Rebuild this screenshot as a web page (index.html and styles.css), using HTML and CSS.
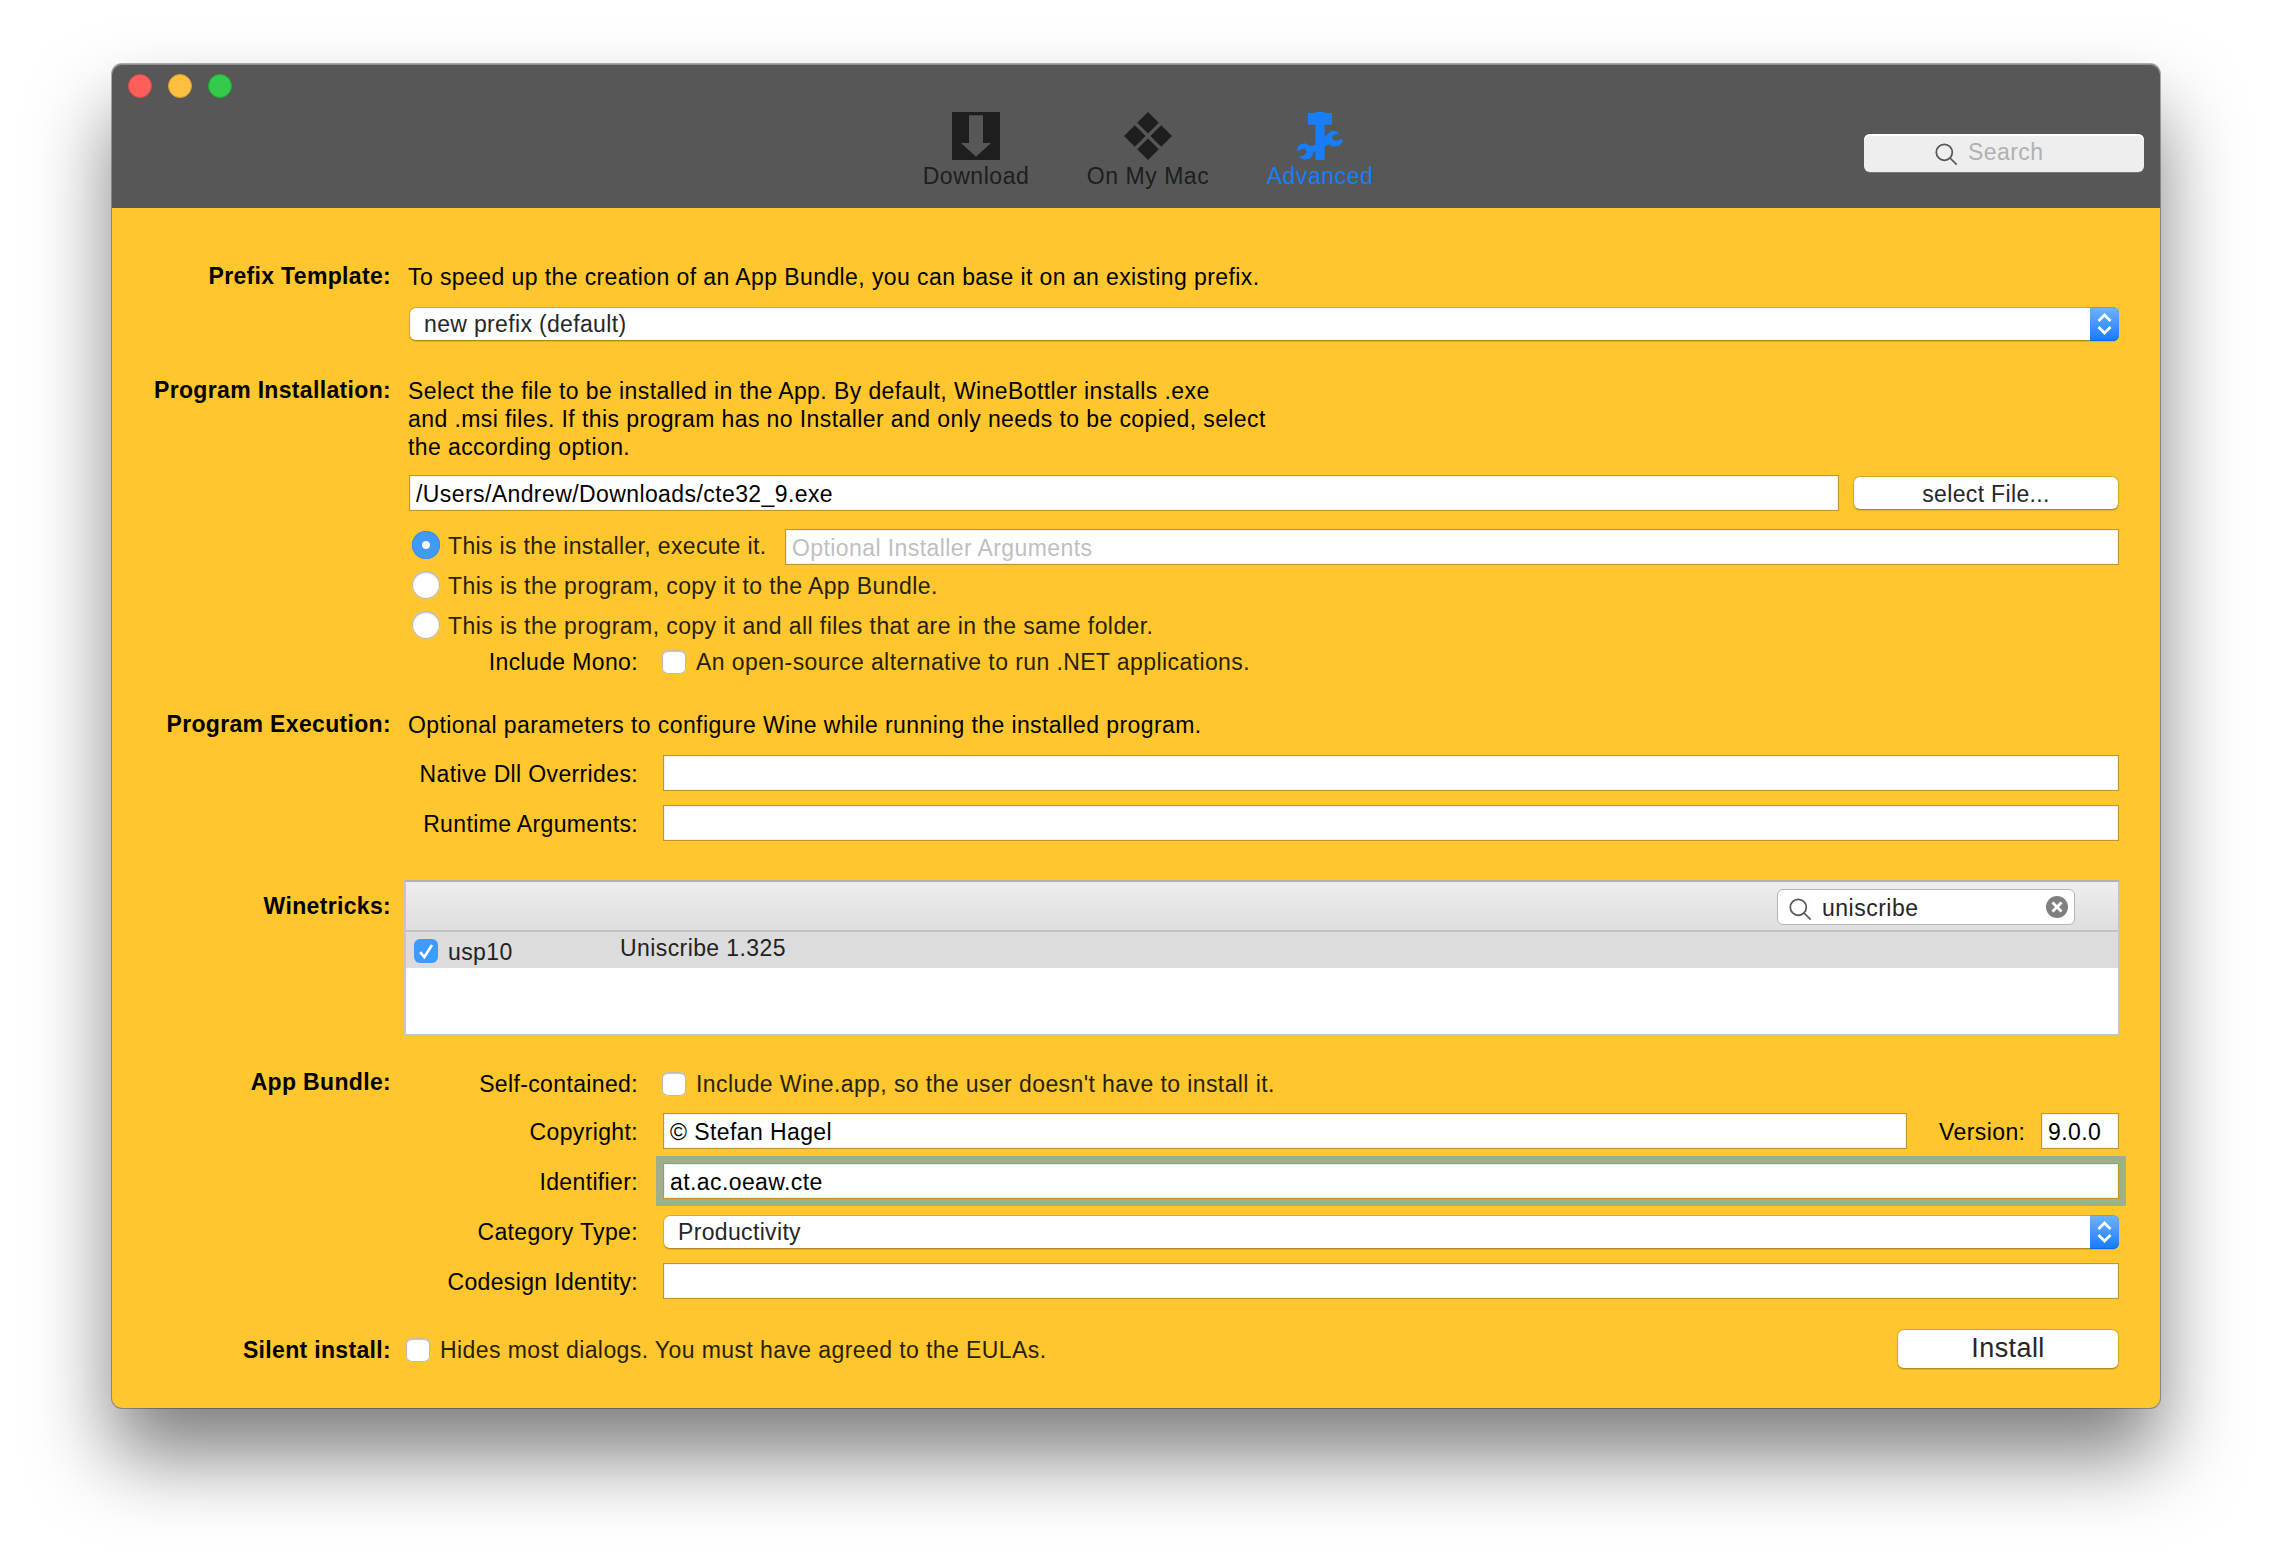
FILE: index.html
```html
<!DOCTYPE html>
<html lang="en">
<head>
<meta charset="utf-8">
<title>WineBottler</title>
<link rel="stylesheet" href="styles.css">
</head>
<body>
<main class="window">
  <header class="titlebar">
    <div class="lights">
      <span class="light red"></span><span class="light yellow"></span><span class="light green"></span>
    </div>
    <nav class="tabs">
      <div class="tab">
        <svg width="48" height="48" viewBox="0 0 48 48"><path fill="currentColor" fill-rule="evenodd" d="M0 0h48v48H0zM17 3.300V31H9L24 44.700 39 31H31V3.300z"/></svg>
        <span>Download</span>
      </div>
      <div class="tab">
        <svg width="48" height="48" viewBox="0 0 48 48"><path fill="currentColor" d="M24 0 34.800 10.800 24 21.600 13.200 10.800zM10.800 13.200 21.600 24 10.800 34.800 0 24zM37.200 13.200 48 24 37.200 34.800 26.400 24zM24 26.400 34.800 37.200 24 48 13.200 37.200z"/></svg>
        <span>On My Mac</span>
      </div>
      <div class="tab active">
        <svg width="48" height="48" viewBox="18 18 144 144"><path fill="currentColor" d="M76 18h28v3h22v35h-22v106H76V56H54V21h22z"/><path fill="currentColor" d="M70 119 100 102 109 87 124 75 137 75 148 81 130 88 126 95 134 106 158 98 157 108 147 120 127 122 118 115 82 133 70 139 67 150 58 158 42 161 26 153 45 147 50 137 43 126 21 136 23 122 32 114 46 112 58 119z"/></svg>
        <span>Advanced</span>
      </div>
    </nav>
    <div class="end">
      <div class="search">
        <svg class="glass" width="24" height="24" viewBox="0 0 24 24"><circle cx="9.300" cy="9.300" r="8"/><path d="M15 15l6.700 6.700"/></svg>
        <span>Search</span>
      </div>
    </div>
  </header>

  <form class="form">
    <div class="row">
      <b class="label">Prefix Template:</b>
      <p class="note">To speed up the creation of an App Bundle, you can base it on an existing prefix.</p>
    </div>
    <div class="row select-row indent">
      <div class="popup"><span>new prefix (default)</span><i class="arrows"><svg width="15" height="22" viewBox="0 0 15 22"><path d="M1.500 8 7.500 2l6 6M1.500 14l6 6 6-6"/></svg></i></div>
    </div>

    <div class="row install">
      <b class="label">Program Installation:</b>
      <p class="note">Select the file to be installed in the App. By default, WineBottler installs .exe<br>and .msi files. If this program has no Installer and only needs to be copied, select<br>the according option.</p>
    </div>
    <div class="row file-row indent">
      <div class="field">/Users/Andrew/Downloads/cte32_9.exe</div>
      <div class="button select-file">select File...</div>
    </div>
    <div class="row radio-row first indent">
      <span class="radio on"></span><span class="choice execute">This is the installer, execute it.</span>
      <div class="field hint">Optional Installer Arguments</div>
    </div>
    <div class="row radio-row second indent"><span class="radio"></span><span class="choice">This is the program, copy it to the App Bundle.</span></div>
    <div class="row radio-row third indent"><span class="radio"></span><span class="choice">This is the program, copy it and all files that are in the same folder.</span></div>
    <div class="row mono-row">
      <span class="sub full">Include Mono:</span><span class="check"></span><span class="choice">An open-source alternative to run .NET applications.</span>
    </div>

    <div class="row execution">
      <b class="label">Program Execution:</b>
      <p class="note">Optional parameters to configure Wine while running the installed program.</p>
    </div>
    <div class="row native"><span class="sub full">Native Dll Overrides:</span><div class="field"></div></div>
    <div class="row gap14"><span class="sub full">Runtime Arguments:</span><div class="field"></div></div>

    <div class="row tricks">
      <b class="label">Winetricks:</b>
      <div class="table">
        <div class="table-head">
          <div class="filter">
            <svg class="glass" width="24" height="24" viewBox="0 0 24 24"><circle cx="9.300" cy="9.300" r="8"/><path d="M15 15l6.700 6.700"/></svg>
            <span>uniscribe</span>
            <svg class="clear" width="22" height="22" viewBox="0 0 22 22"><circle cx="11" cy="11" r="11"/><path d="M6.500 6.500l9 9M15.500 6.500l-9 9"/></svg>
          </div>
        </div>
        <div class="table-row">
          <span class="check on"><svg width="24" height="24" viewBox="0 0 24 24"><path d="M6.200 13.200 10.300 18 18 6"/></svg></span>
          <span class="name">usp10</span><span class="title">Uniscribe 1.325</span>
        </div>
      </div>
    </div>

    <div class="row bundle">
      <b class="label">App Bundle:</b>
      <span class="sub">Self-contained:</span><span class="check"></span><span class="choice">Include Wine.app, so the user doesn't have to install it.</span>
    </div>
    <div class="row copyright">
      <span class="sub full">Copyright:</span><div class="field">© Stefan Hagel</div>
      <span class="version-label">Version:</span><div class="field version">9.0.0</div>
    </div>
    <div class="row gap14"><span class="sub full">Identifier:</span><div class="field focused">at.ac.oeaw.cte</div></div>
    <div class="row category"><span class="sub full">Category Type:</span>
      <div class="popup"><span>Productivity</span><i class="arrows"><svg width="15" height="22" viewBox="0 0 15 22"><path d="M1.500 8 7.500 2l6 6M1.500 14l6 6 6-6"/></svg></i></div>
    </div>
    <div class="row gap14"><span class="sub full">Codesign Identity:</span><div class="field"></div></div>

    <div class="row silent">
      <b class="label">Silent install:</b>
      <span class="check"></span><span class="choice">Hides most dialogs. You must have agreed to the EULAs.</span>
      <div class="button go">Install</div>
    </div>
  </form>
</main>
</body>
</html>
```
FILE: styles.css
```css
* { box-sizing: border-box; }

body {
  margin: 0;
  height: 1568px;
  padding: 64px 112px 0;
  background: #fff;
  overflow: hidden;
  font: 23px/27px "Liberation Sans", Arial, sans-serif;
  letter-spacing: 0.41px;
  color: #000;
}

.window {
  height: 1344px;
  border-radius: 10px;
  background: #ffc72d;
  box-shadow: 0 0 0 1px rgba(0, 0, 0, 0.3), 0 48px 80px rgba(0, 0, 0, 0.5);
}

/* title bar */
.titlebar {
  display: flex;
  height: 144px;
  border-radius: 10px 10px 0 0;
  background: #575757;
  box-shadow: inset 0 1px 0 #8f8f8f;
}
.lights { display: flex; width: 778px; padding: 10px 0 0 16px; gap: 16px; }
.light { width: 24px; height: 24px; border-radius: 50%; border: 1px solid; }
.red { background: #fe5f5a; border-color: #e0443f; }
.yellow { background: #febf40; border-color: #dd9d2b; }
.green { background: #34cb4a; border-color: #1fa831; }

.tabs { display: flex; color: #1e1e1e; letter-spacing: 0.55px; }
.tab { display: flex; flex-direction: column; align-items: center; width: 172px; padding-top: 48px; flex: none; }
.tab span { margin-top: 3px; }
.tab.active { color: #167efb; }
.tab svg { display: block; }

.end { display: flex; flex: 1; justify-content: flex-end; padding: 70px 16px 0 0; }
.search {
  display: flex;
  width: 280px;
  height: 38px;
  padding: 9px 0 0 71px;
  border-radius: 6px;
  background: #eee;
  box-shadow: inset 0 2px 0 #fff, 0 1px 0 #777;
  color: #b1b1b1;
}
.search span { margin: -4px 0 0 9px; }
.glass { flex: none; fill: none; stroke: #555; stroke-width: 1.7; }

/* form rows */
.form { display: flex; flex-direction: column; padding: 55px 41px 0 0; }
.row { display: flex; align-items: flex-start; }
.indent { padding-left: 297px; }
.label { width: 279px; flex: none; text-align: right; letter-spacing: 0.33px; }
.note { margin: 0 0 0 17px; line-height: 28px; white-space: nowrap; }
.sub { width: 247px; flex: none; text-align: right; margin-right: 24px; letter-spacing: 0.36px; }
.sub.full { width: 526px; }
.choice { color: #271f07; white-space: nowrap; }

.field {
  flex: 1;
  height: 36px;
  padding: 5px 0 0 6px;
  border: 1px solid #bf952a;
  background: #fff;
  box-shadow: inset 0 0 0 1px #f1f1f1;
  white-space: nowrap;
}
.focused { box-shadow: inset 0 0 0 1px #f1f1f1, 0 0 0 7px #9fae8d; }
.focused { position: relative; }
.hint { color: #bfbfbf; }

.popup {
  flex: 1;
  display: flex;
  justify-content: space-between;
  height: 34px;
  border: 1px solid #d9a926;
  border-bottom-color: #b08a20;
  border-radius: 7px;
  background: #fff;
  box-shadow: 0 1px 1px rgba(0, 0, 0, 0.12);
  color: #262626;
  letter-spacing: 0.34px;
}
.popup span { padding: 3px 0 0 14px; }
.arrows {
  display: flex;
  align-items: center;
  justify-content: center;
  width: 29px;
  height: 34px;
  margin: -1px -1px 0 0;
  border-radius: 0 6px 6px 0;
  background: linear-gradient(#6fb4f8, #147bfe);
  box-shadow: inset 0 -1px 0 #1068e6, inset 0 1px 0 #5ba4ee;
}
.arrows svg { fill: none; stroke: #fff; stroke-width: 2.7; }

.button {
  border: 1px solid #d9a926;
  border-bottom-color: #b08a20;
  border-radius: 7px;
  background: #fff;
  box-shadow: 0 1px 1px rgba(0, 0, 0, 0.12);
  color: #262626;
  text-align: center;
}

.radio {
  flex: none;
  width: 28px;
  height: 28px;
  margin: 0 8px 0 3px;
  border-radius: 50%;
  background: radial-gradient(#fff 55%, #f4f4f4);
  box-shadow: inset 0 0 0 1px #bdb5a0, inset 0 2px 2px #c9c9c9;
}
.radio.on { background: radial-gradient(circle, #fff 3.500px, #3f9af8 4.500px); box-shadow: inset 0 0 0 1px #3a8fe6; }

.check {
  flex: none;
  width: 24px;
  height: 24px;
  border-radius: 6px;
  background: #fff;
  box-shadow: inset 0 0 0 1px #c2bba8, inset 0 2px 1px #c4c4c4;
}
.check.on { background: #3f9bfb; box-shadow: none; }
.check.on svg { display: block; fill: none; stroke: #fff; stroke-width: 2.6; }
.check + .choice { margin-left: 10px; }

/* per-row spacing */
.select-row { margin-top: 16px; }
.install { margin-top: 36px; }
.file-row { margin-top: 14px; }
.file-row .field { flex: none; width: 1430px; }
.select-file { width: 266px; height: 34px; margin: 1px 0 0 14px; padding-top: 4px; letter-spacing: 0.35px; }
.radio-row { height: 28px; }
.radio-row.first { margin-top: 18px; height: 36px; }
.first .radio { margin-top: 2px; }
.first .choice { margin-top: 4px; }
.execute { width: 337px; flex: none; letter-spacing: 0.34px; }
.second { margin-top: 6px; }
.third { margin-top: 12px; }
.second .choice, .third .choice { margin-top: 2px; }
.mono-row { margin-top: 10px; }
.mono-row .check { margin-top: 1px; }
.execution { margin-top: 35px; }
.native { margin-top: 16px; }
.gap14 { margin-top: 14px; }
.native .sub, .gap14 .sub, .copyright .sub { margin: 6px 25px 0 0; }

/* winetricks table */
.tricks { margin-top: 39px; }
.tricks .label { margin-top: 13px; }
.table { width: 1716px; flex: none; margin: 0 -1px 0 13px; height: 156px; border: 2px solid #c5c5c5; border-top-color: #b2b2b2; background: #fff; }
.table-head {
  display: flex;
  justify-content: flex-end;
  height: 50px;
  padding: 7px 43px 0 0;
  border-bottom: 2px solid #c2c2c2;
  background: linear-gradient(#eee, #dedede);
}
.filter {
  display: flex;
  width: 298px;
  height: 36px;
  padding: 8px 6px 0 11px;
  border: 1px solid #b5b5b5;
  border-radius: 6px;
  background: #fff;
  color: #262626;
  letter-spacing: 0.5px;
}
.filter span { flex: 1; margin: -3px 0 0 9px; }
.clear { margin-top: -2px; fill: #7f7f7f; }
.clear path { stroke: #fff; stroke-width: 2.8; }
.table-row { display: flex; height: 36px; background: #dcdcdc; color: #222; padding-left: 8px; }
.table-row .check { margin-top: 7px; }
.name { width: 172px; margin: 7px 0 0 10px; }
.title { margin-top: 3px; }

/* bundle */
.bundle { margin-top: 33px; height: 29px; }
.bundle .sub, .bundle .choice { margin-top: 2px; }
.bundle .check { margin-top: 3px; }
.copyright { margin-top: 15px; }
.version-label { width: 134px; padding: 6px 0 0 32px; flex: none; }
.version { flex: none; width: 78px; }
.category { margin-top: 16px; }
.category .sub { margin: 4px 25px 0 0; }

.silent { margin-top: 30px; }
.silent .label, .silent .choice { margin-top: 8px; }
.silent .check { margin: 9px 0 0 15px; }
.silent .choice { flex: 1; }
.go { width: 222px; height: 40px; padding-top: 5px; font-size: 27px; }
```
